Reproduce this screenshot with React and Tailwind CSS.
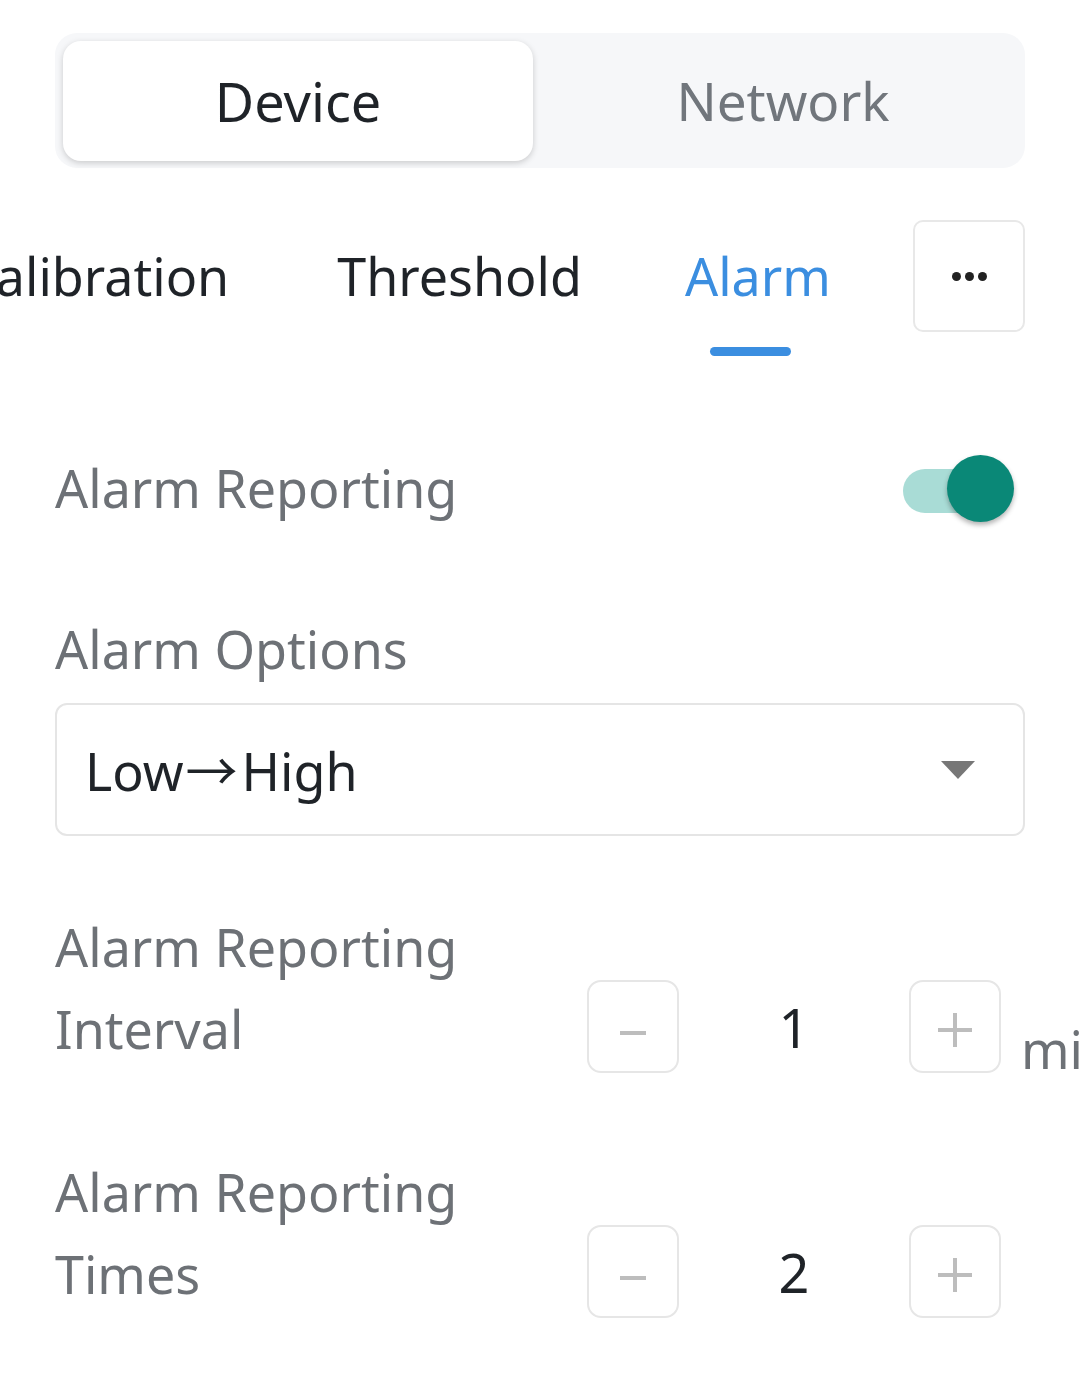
import React from "react";

function Stepper({ value }) {
  return (
    <div className="flex items-center shrink-0">
      <div className="w-[92px] h-[93px] rounded-[14px] border-2 border-[#e6e6e6] flex items-center justify-center">
        <div className="w-[26px] h-[4px] bg-[#bdbdbd] mt-[12px]" />
      </div>
      <div className="w-[230px] text-center text-[54px] text-[#1f2328] leading-none">{value}</div>
      <div className="w-[92px] h-[93px] rounded-[14px] border-2 border-[#e6e6e6] flex items-center justify-center">
        <svg width="34" height="34" viewBox="0 0 34 34" className="mt-[6px]">
          <rect x="15" y="0" width="4" height="34" fill="#bdbdbd" />
          <rect x="0" y="15" width="34" height="4" fill="#bdbdbd" />
        </svg>
      </div>
    </div>
  );
}

export default function App() {
  return (
    <div
      className="w-[1080px] h-[1386px] bg-white overflow-hidden relative"
      style={{ fontFamily: '"Noto Sans", Roboto, sans-serif' }}
    >
      {/* Segmented control */}
      <div className="mx-[55px] mt-[33px] h-[135px] rounded-[22px] bg-[#f6f7f9] p-[8px] flex">
        <div className="w-[470px] h-[120px] bg-white rounded-[18px] shadow-[0_2px_6px_rgba(0,0,0,0.18)] flex items-center justify-center text-[54px] text-[#1f2328]">
          Device
        </div>
        <div className="flex-1 pl-[16px] flex items-center justify-center text-[53px] text-[#71767c]">
          Network
        </div>
      </div>

      {/* Tabs */}
      <div className="mt-[52px] h-[140px] flex items-start relative">
        <div className="flex-1 overflow-hidden h-full relative">
          <div className="absolute left-[-37px] top-0 h-[112px] flex items-center text-[52px] whitespace-nowrap">
            <div className="text-[#1f2328]">Calibration</div>
            <div className="ml-[108px] text-[#1f2328]">Threshold</div>
            <div className="ml-[103px] text-[#3b8ee0] relative">
              Alarm
              <div className="absolute left-[25px] top-[110px] w-[81px] h-[9px] rounded-full bg-[#3b8ee0]" />
            </div>
          </div>
        </div>
        <div className="w-[112px] h-[112px] mr-[55px] ml-[30px] rounded-[10px] border-2 border-[#e8e8e8] flex items-center justify-center gap-[4px] shrink-0">
          <div className="w-[9px] h-[9px] rounded-full bg-[#222]" />
          <div className="w-[9px] h-[9px] rounded-full bg-[#222]" />
          <div className="w-[9px] h-[9px] rounded-full bg-[#222]" />
        </div>
      </div>

      {/* Alarm Reporting toggle */}
      <div className="mx-[55px] mt-[89px] flex items-center justify-between">
        <div className="text-[52px] text-[#6d7176]">Alarm Reporting</div>
        <div className="relative w-[112px] h-[70px] mr-[10px] mt-[4px]">
          <div className="absolute left-0 top-[14px] w-[98px] h-[44px] rounded-full bg-[#a9dcd6]" />
          <div className="absolute right-[1px] top-0 w-[67px] h-[67px] rounded-full bg-[#0a8877] shadow-[0_3px_5px_rgba(0,0,0,0.3)]" />
        </div>
      </div>

      {/* Alarm Options */}
      <div className="mx-[55px] mt-[83px]">
        <div className="text-[52px] text-[#6d7176]">Alarm Options</div>
        <div className="mt-[15px] h-[133px] rounded-[12px] border-2 border-[#e5e5e5] flex items-center justify-between pl-[28px] pr-[48px]">
          <div className="text-[52px] text-[#1f2328]">
            Low
            <span className="pl-[2px] pr-[4px]" style={{ fontFamily: '"Noto Sans CJK SC", sans-serif' }}>→</span>
            High
          </div>
          <svg width="34" height="18" viewBox="0 0 34 18">
            <polygon points="0,0 34,0 17,18" fill="#777" />
          </svg>
        </div>
      </div>

      {/* Interval */}
      <div className="ml-[55px] mt-[70px] flex items-end">
        <div className="w-[532px] shrink-0 text-[52px] leading-[82px] text-[#6d7176]">
          Alarm Reporting
          <br />
          Interval
        </div>
        <div className="mb-[-3px] flex items-end shrink-0">
          <Stepper value="1" />
          <div className="ml-[20px] text-[52px] leading-none text-[#6d7176] mb-[-2px] whitespace-nowrap">min</div>
        </div>
      </div>

      {/* Times */}
      <div className="ml-[55px] mt-[81px] flex items-end">
        <div className="w-[532px] shrink-0 text-[52px] leading-[82px] text-[#6d7176]">
          Alarm Reporting
          <br />
          Times
        </div>
        <div className="mb-[-3px] shrink-0">
          <Stepper value="2" />
        </div>
      </div>
    </div>
  );
}
